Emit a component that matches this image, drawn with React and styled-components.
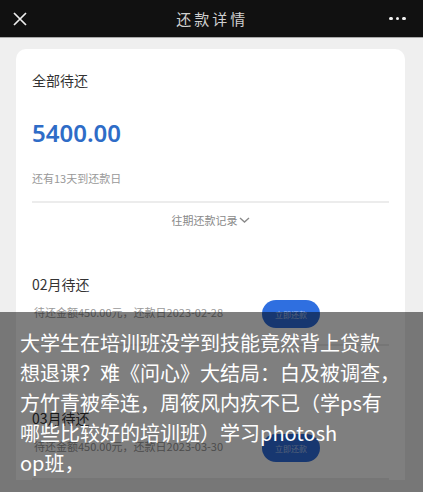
import React from "react";
import styled, { createGlobalStyle } from "styled-components";

const GlobalStyle = createGlobalStyle`
  html, body {
    margin: 0;
    padding: 0;
    background: #efefef;
    font-family: "Noto Sans CJK SC", "Noto Sans", sans-serif;
  }
  * { box-sizing: border-box; }
`;

const Screen = styled.div`
  position: relative;
  width: 423px;
  height: 492px;
  overflow: hidden;
  background: #efefef;
`;

const TopBar = styled.div`
  height: 38px;
  background: #111111;
  border-bottom: 1px solid #a9a9a9;
  display: flex;
  align-items: center;
  justify-content: space-between;
  padding: 0 17px 0 13px;
`;

const Title = styled.div`
  color: #d0d0d0;
  font-size: 15px;
  letter-spacing: 3px;
  font-weight: 400;
  margin-left: 8px;
`;

const Dots = styled.div`
  display: flex;
  gap: 3px;
  span {
    width: 3.5px;
    height: 3.5px;
    border-radius: 50%;
    background: #f2f2f2;
  }
`;

const Content = styled.div`
  padding: 11px 18px 0 16px;
`;

const Card = styled.div`
  background: #fff;
  border-radius: ${(p) => (p.top ? "10px 10px 0 0" : "0")};
  padding: ${(p) => p.pad || "0 16px"};
`;

const Label = styled.div`
  font-size: 14px;
  color: #333;
  line-height: 20px;
`;

const Amount = styled.div`
  margin-top: 28px;
  font-family: "Noto Sans", sans-serif;
  font-size: 24px;
  font-weight: 600;
  color: #2e6cc7;
  line-height: 30px;
`;

const Hint = styled.div`
  font-size: 11px;
  color: #999;
  line-height: 16px;
  margin-top: ${(p) => p.top || 0}px;
`;

const Divider = styled.div`
  height: 2px;
  background: #ececec;
  margin-top: ${(p) => p.top || 0}px;
`;

const History = styled.div`
  display: flex;
  align-items: center;
  justify-content: center;
  gap: 1px;
  font-size: 11px;
  color: #8a8a8a;
  line-height: 16px;
  padding: 9px 0 26px;
`;

const Bill = styled.div`
  padding-top: ${(p) => p.top}px;
`;

const BillLine = styled.div`
  display: flex;
  align-items: center;
  margin-top: 6px;
`;

const BillText = styled.div`
  width: 230px;
  font-size: 11px;
  color: #9a9a9a;
  line-height: 16px;
  padding-left: 2px;
  margin-top: -4px;
`;

const PayButton = styled.button`
  width: 58px;
  height: 28px;
  border: none;
  border-radius: 14px;
  background: #2f6fe0;
  color: #a9c3f2;
  font-family: inherit;
  font-size: 8px;
  padding: 0;
`;

const Overlay = styled.div`
  position: absolute;
  left: 0;
  right: 0;
  top: 312px;
  bottom: 0;
  background: rgba(0, 0, 0, 0.5);
  padding: 16px 20px 0;
  color: #fff;
  font-size: 20px;
  line-height: 30px;
`;

const Line = styled.div`
  white-space: nowrap;
`;

const lines = [
  "大学生在培训班没学到技能竟然背上贷款",
  "想退课？难《问心》大结局：白及被调查，",
  "方竹青被牵连，周筱风内疚不已（学ps有",
  "哪些比较好的培训班）学习photosh",
  "op班，",
];

const bills = [
  { month: "02月待还", date: "2023-02-28", top: 20 },
  { month: "03月待还", date: "2023-03-30", top: 62 },
];

export default function App() {
  return (
    <>
      <GlobalStyle />
      <Screen>
        <TopBar>
          <svg width="14" height="14" viewBox="0 0 14 14">
            <path d="M1 1L13 13M13 1L1 13" stroke="#eeeeee" strokeWidth="1.7" />
          </svg>
          <Title>还款详情</Title>
          <Dots>
            <span />
            <span />
            <span />
          </Dots>
        </TopBar>
        <Content>
          <Card top pad="21px 16px 0">
            <Label>全部待还</Label>
            <Amount>5400.00</Amount>
            <Hint top={22}>还有13天到还款日</Hint>
            <Divider top={15} />
            <History>
              往期还款记录
              <svg width="11" height="8" viewBox="0 0 11 8">
                <path d="M1 2L5.5 6L10 2" stroke="#8a8a8a" strokeWidth="1.4" fill="none" />
              </svg>
            </History>
          </Card>
          <Card>
            {bills.map((b) => (
              <Bill key={b.month} top={b.top}>
                <Label>{b.month}</Label>
                <BillLine>
                  <BillText>待还金额450.00元，还款日{b.date}</BillText>
                  <PayButton>立即还款</PayButton>
                </BillLine>
                <Divider top={16} />
              </Bill>
            ))}
          </Card>
        </Content>
        <Overlay>
          {lines.map((l) => (
            <Line key={l}>{l}</Line>
          ))}
        </Overlay>
      </Screen>
    </>
  );
}
